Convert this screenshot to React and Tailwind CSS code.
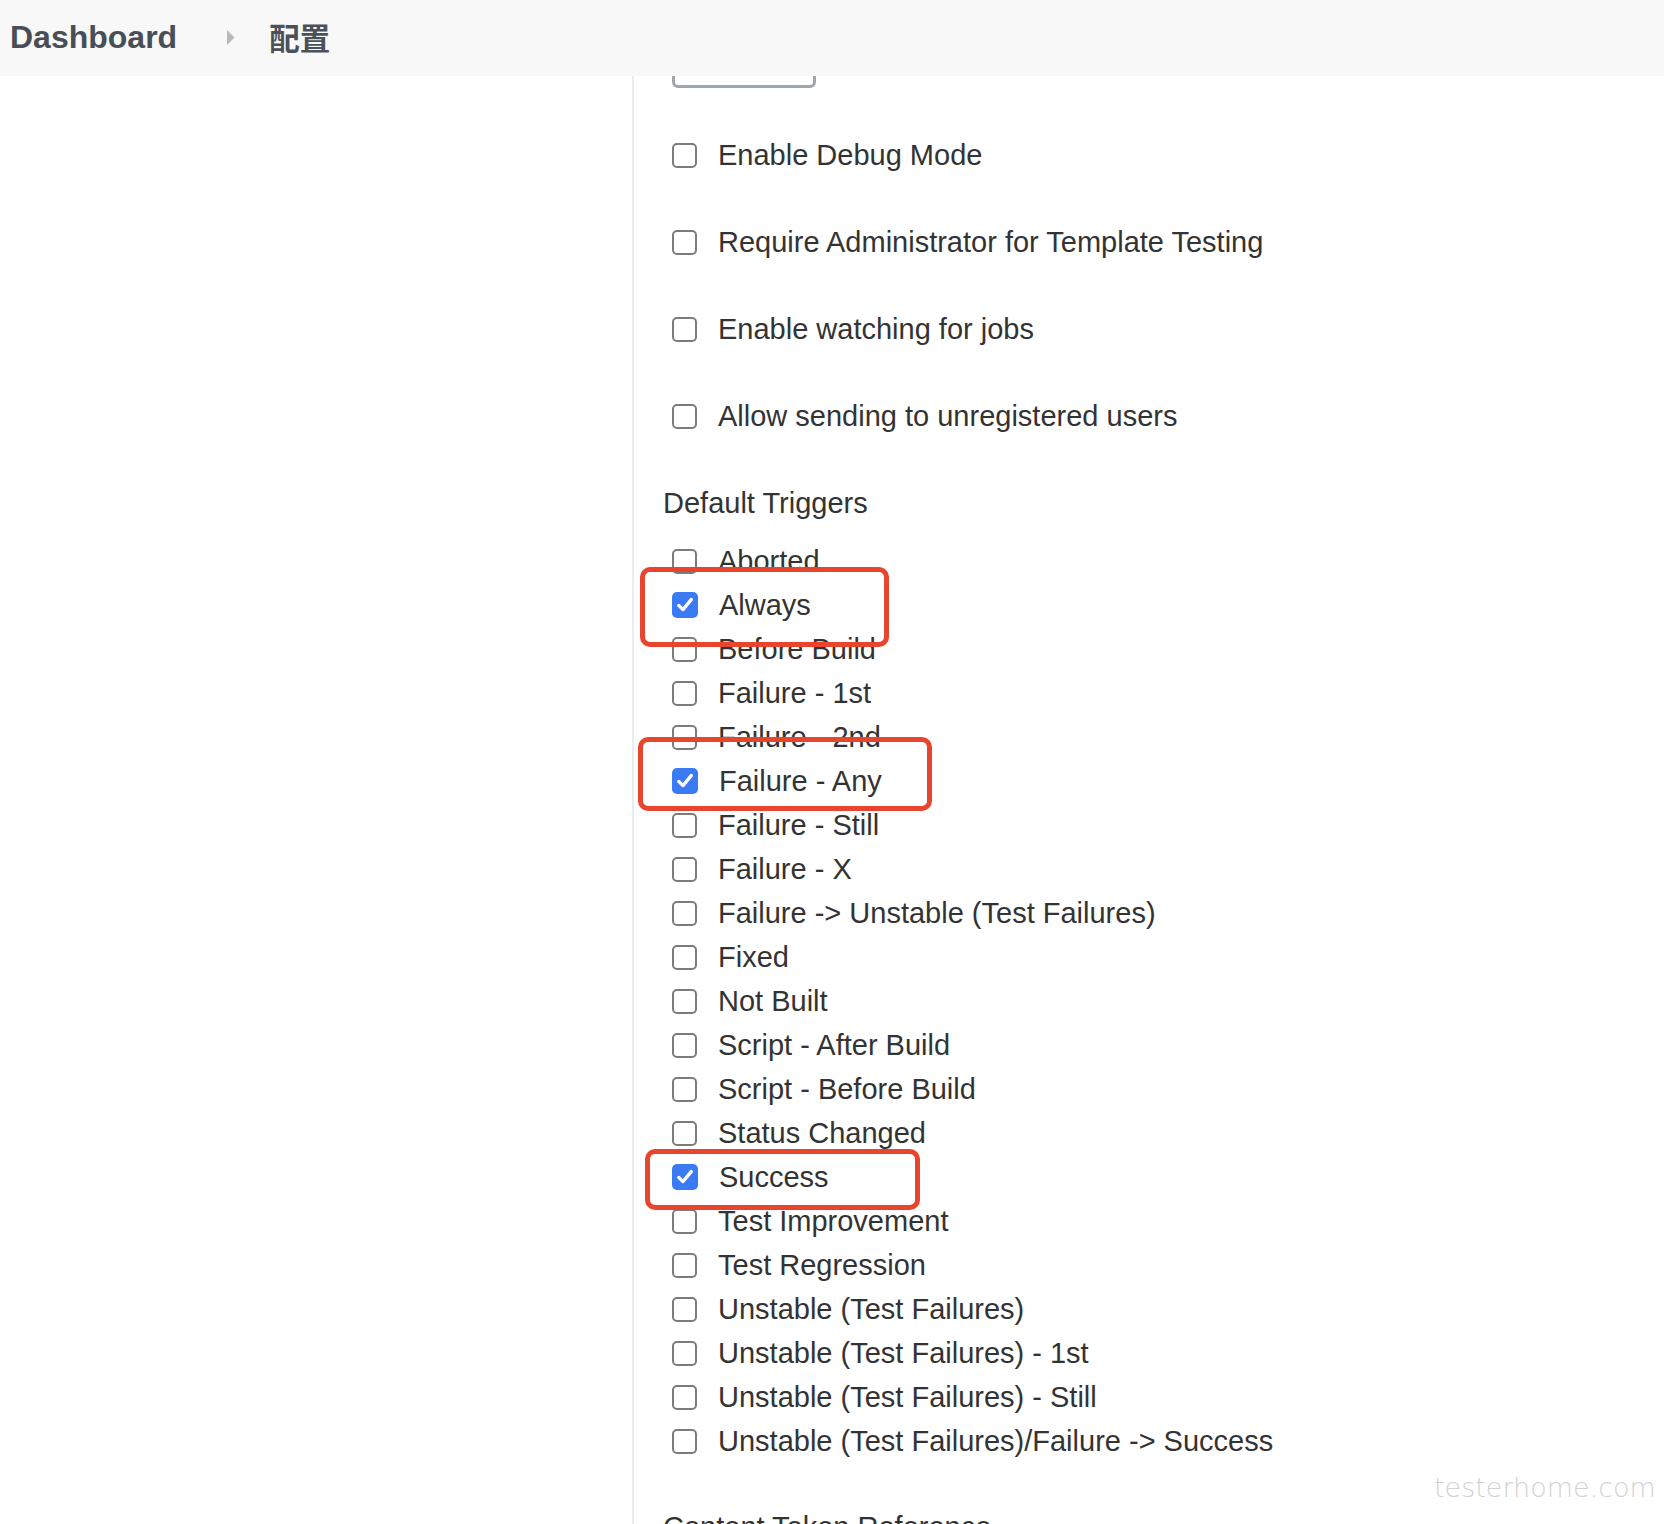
import React from "react";

const upper = [
  "Enable Debug Mode",
  "Require Administrator for Template Testing",
  "Enable watching for jobs",
  "Allow sending to unregistered users",
];

const triggers = [
  ["Aborted", false],
  ["Always", true],
  ["Before Build", false],
  ["Failure - 1st", false],
  ["Failure - 2nd", false],
  ["Failure - Any", true],
  ["Failure - Still", false],
  ["Failure - X", false],
  ["Failure -> Unstable (Test Failures)", false],
  ["Fixed", false],
  ["Not Built", false],
  ["Script - After Build", false],
  ["Script - Before Build", false],
  ["Status Changed", false],
  ["Success", true],
  ["Test Improvement", false],
  ["Test Regression", false],
  ["Unstable (Test Failures)", false],
  ["Unstable (Test Failures) - 1st", false],
  ["Unstable (Test Failures) - Still", false],
  ["Unstable (Test Failures)/Failure -> Success", false],
];

function Box({ checked }) {
  if (checked) {
    return (
      <span className="flex h-[26px] w-[26px] shrink-0 items-center justify-center rounded-[5px] bg-[#3a7af5]">
        <svg width="20" height="20" viewBox="0 0 24 24" fill="none">
          <path d="M4.5 12.5 L9.5 17.5 L19.5 5.5" stroke="white" strokeWidth="4" strokeLinecap="round" strokeLinejoin="round" />
        </svg>
      </span>
    );
  }
  return <span className="block h-[25px] w-[25px] shrink-0 rounded-[5px] border-2 border-[#7c7c7c] bg-white" />;
}

function Row({ label, checked }) {
  return (
    <div className="flex h-[44px] items-center pl-[9px]">
      <Box checked={checked} />
      <span className="ml-[21px] whitespace-nowrap text-[29px] leading-none text-[#333333]">{label}</span>
    </div>
  );
}

export default function App() {
  return (
    <div
      className="relative h-[1524px] w-full overflow-hidden bg-white"
      style={{ fontFamily: '"Liberation Sans", Arial, "Noto Sans CJK SC", sans-serif' }}
    >
      <header className="flex h-[76px] items-center bg-[#f8f8f8] pb-[2px] pl-[10px] text-[#474e57]">
        <span className="text-[32px] font-bold leading-none">Dashboard</span>
        <svg className="ml-[50px]" width="8" height="15" viewBox="0 0 8 15">
          <path d="M0 0 L7.5 7.5 L0 15 Z" fill="#b8b8b8" />
        </svg>
        <span
          className="ml-[34px] text-[30.5px] font-bold leading-none text-[#4b5159]"
          style={{ fontFamily: '"Noto Sans CJK SC", sans-serif' }}
        >
          配置
        </span>
      </header>

      <div className="flex">
        <aside className="h-[1448px] w-[634px] shrink-0 border-r-2 border-[#e9edf1]" />
        <main className="relative flex-1 pl-[29px]">
          <div className="ml-[9px] h-[12px] w-[144px] rounded-b-[6px] border-[3px] border-t-0 border-[#9ea6ae]" />

          <div className="mt-[45px] flex flex-col gap-[43px]">
            {upper.map((u) => (
              <Row key={u} label={u} checked={false} />
            ))}
          </div>

          <div className="mt-[47px] h-[36px] text-[29px] leading-[36px] text-[#333333]">Default Triggers</div>

          <div className="mt-[18px] flex flex-col">
            {triggers.map(([l, c]) => (
              <Row key={l} label={l} checked={c} />
            ))}
          </div>

          <div className="mt-[46px] h-[36px] whitespace-nowrap text-[29px] leading-[36px] text-[#333333]">
            Content Token Reference
          </div>

          <div className="pointer-events-none absolute left-[6px] top-[491px] h-[80px] w-[249px] rounded-[10px] border-[5px] border-[#e8452f]" />
          <div className="pointer-events-none absolute left-[4px] top-[661px] h-[74px] w-[294px] rounded-[10px] border-[5px] border-[#e8452f]" />
          <div className="pointer-events-none absolute left-[11px] top-[1073px] h-[61px] w-[275px] rounded-[10px] border-[5px] border-[#e8452f]" />
        </main>
      </div>

      <div
        className="pointer-events-none absolute left-[1434px] top-[1474px] whitespace-nowrap text-[27px] font-extralight leading-none text-[#d2d2d2]"
        style={{ fontFamily: '"DejaVu Sans", sans-serif' }}
      >
        testerhome.com
      </div>
    </div>
  );
}
